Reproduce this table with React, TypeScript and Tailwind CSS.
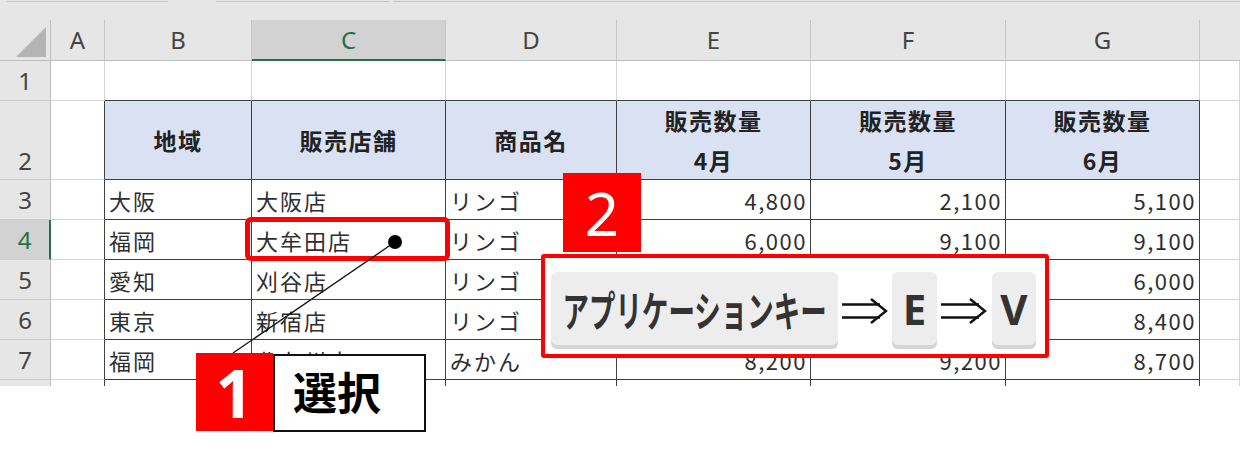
import React from "react";

const CJK = "font-['Noto_Sans_CJK_JP',sans-serif]";
const LAT = "font-['Noto_Sans',sans-serif]";

const COLS = ["A", "B", "C", "D", "E", "F", "G"];

// E5, F5, E6, F6 sit under the key-sequence callout
const DATA = [
  { n: 3, b: "大阪", c: "大阪店", d: "リンゴ", e: "4,800", f: "2,100", g: "5,100" },
  { n: 4, b: "福岡", c: "大牟田店", d: "リンゴ", e: "6,000", f: "9,100", g: "9,100" },
  { n: 5, b: "愛知", c: "刈谷店", d: "リンゴ", e: "", f: "", g: "6,000" },
  { n: 6, b: "東京", c: "新宿店", d: "リンゴ", e: "", f: "", g: "8,400" },
  { n: 7, b: "福岡", c: "北九州店", d: "みかん", e: "8,200", f: "9,200", g: "8,700" },
];

function RowHead({ label, selected, bottom }: { label: string; selected?: boolean; bottom?: boolean }) {
  return (
    <div
      className={
        "flex justify-center border-b border-b-[#d0d0d0] text-[24px] leading-none " +
        LAT +
        (bottom ? " items-end pb-[6px]" : " items-center") +
        (selected
          ? " bg-[#d2d2d2] border-r-2 border-r-[#217346] text-[#217346]"
          : " bg-[#e6e6e6] border-r border-r-[#bdbdbd] text-[#444]")
      }
    >
      {label}
    </div>
  );
}

function Arrow() {
  return (
    <svg width="46" height="26" viewBox="0 0 46 26" className="shrink-0">
      <path d="M0 6.5H38M0 19.5H38" stroke="#111" strokeWidth="2.4" fill="none" />
      <path d="M29 1L44 13L29 25" stroke="#111" strokeWidth="2.4" fill="none" strokeLinejoin="miter" />
    </svg>
  );
}

function Key({ children, className }: { children: React.ReactNode; className?: string }) {
  return (
    <div
      className={
        "h-[77px] rounded-[6px] bg-[#ededed] shadow-[inset_0_-4px_0_#d5d5d5] flex items-center justify-center overflow-visible " +
        (className ?? "")
      }
    >
      {children}
    </div>
  );
}

export default function App() {
  const light = "border-[#d4d4d4]";
  return (
    <div className="relative w-[1240px] h-[467px] overflow-hidden bg-white text-[#2e2e2e]">
      {/* strip above the sheet */}
      <div className="h-[20px] bg-[#e6e6e6] flex items-start">
        <div className="ml-[7px] w-[161px] h-[2px] border-b border-[#c4c4c4]" />
        <div className="ml-[48px] w-[173px] h-[2px] border-b border-[#c4c4c4]" />
        <div className="ml-[4px] flex-1 h-[2px] border-b border-[#c4c4c4]" />
      </div>

      <div className="grid grid-cols-[51px_54px_147px_194px_171px_194px_195px_194px_1fr] grid-rows-[41px_40px_79px_40px_40px_40px_40px_40px_6px]">
        {/* column letters */}
        <div className="bg-[#e6e6e6] border-r border-b border-[#bdbdbd]">
          <svg width="50" height="40" viewBox="0 0 50 40">
            <polygon points="16,37 46,7 46,37" fill="#b4b4b4" />
          </svg>
        </div>
        {COLS.map((c) => (
          <div
            key={c}
            className={
              "flex items-center justify-center border-r border-r-[#c8c8c8] text-[24px] leading-none " +
              LAT +
              (c === "C"
                ? " bg-[#d2d2d2] border-b-2 border-b-[#217346] text-[#1f6f52]"
                : " bg-[#e6e6e6] border-b border-b-[#bdbdbd] text-[#444]")
            }
          >
            {c}
          </div>
        ))}
        <div className="bg-[#e6e6e6] border-b border-[#bdbdbd]" />

        {/* row 1 */}
        <RowHead label="1" />
        <div className={"border-r border-b " + light} />
        {["B", "C", "D", "E", "F", "G"].map((c) => (
          <div key={c} className="border-r border-r-[#d4d4d4] border-b border-b-[#404040]" />
        ))}
        <div className={"border-r border-b " + light} />

        {/* row 2 header */}
        <RowHead label="2" bottom />
        <div className="border-r border-r-[#404040] border-b border-b-[#d4d4d4]" />
        {[["地域"], ["販売店舗"], ["商品名"], ["販売数量", "4月"], ["販売数量", "5月"], ["販売数量", "6月"]].map(
          (lines, i) => (
            <div
              key={i}
              className={
                "flex flex-col items-center justify-center bg-[#d9e1f2] border-r border-b border-[#404040] font-bold text-[23px] tracking-[1.5px] leading-[40px] text-[#222] " +
                CJK
              }
            >
              {lines.map((l) => (
                <span key={l}>{l}</span>
              ))}
            </div>
          )
        )}
        <div className={"border-r border-b " + light} />

        {/* data rows */}
        {DATA.map((r) => (
          <React.Fragment key={r.n}>
            <RowHead label={String(r.n)} selected={r.n === 4} />
            <div className="border-r border-r-[#404040] border-b border-b-[#d4d4d4]" />
            {[r.b, r.c, r.d].map((t, i) => (
              <div
                key={i}
                className={
                  "flex items-center pl-[4px] border-r border-b border-[#404040] text-[22px] tracking-[2px] leading-none whitespace-nowrap " +
                  CJK
                }
              >
                {t}
              </div>
            ))}
            {[r.e, r.f, r.g].map((t, i) => (
              <div
                key={i}
                className={
                  "flex items-center justify-end pr-[3px] border-r border-b border-[#404040] text-[22px] tracking-[1.5px] leading-none " +
                  CJK
                }
              >
                {t}
              </div>
            ))}
            <div className={"border-r border-b " + light} />
          </React.Fragment>
        ))}

        {/* partial row 8 */}
        <div className="bg-[#e6e6e6] border-r border-[#bdbdbd]" />
        <div className="border-r border-[#404040]" />
        {["B", "C", "D", "E", "F", "G"].map((c) => (
          <div key={c} className="border-r border-[#404040]" />
        ))}
        <div className={"border-r " + light} />
      </div>

      {/* annotation: selected cell */}
      <div className="absolute left-[245px] top-[217px] w-[205px] h-[44px] rounded-[6px] border-[5px] border-[#ff0000]" />

      <svg className="absolute left-0 top-0 pointer-events-none" width="1240" height="467">
        <line x1="395" y1="242" x2="233" y2="353" stroke="#111" strokeWidth="1.3" />
        <circle cx="395" cy="242" r="7" fill="#000" />
      </svg>

      {/* callout 1 */}
      <div className="absolute left-[196px] top-[353px] flex">
        <div
          className={
            "w-[77px] h-[78px] bg-[#ff0000] flex items-center justify-center text-white font-bold text-[66px] leading-none " +
            LAT
          }
        >
          1
        </div>
        <div
          className={
            "mt-[1px] w-[153px] h-[78px] bg-white border-2 border-[#111] flex items-center pl-[18px] pb-[4px] font-bold text-[44px] leading-none text-black " +
            CJK
          }
        >
          選択
        </div>
      </div>

      {/* callout 2 */}
      <div
        className={
          "absolute left-[563px] top-[173px] w-[78px] h-[79px] bg-[#ff0000] flex items-center justify-center text-white text-[60px] leading-none " +
          LAT
        }
      >
        2
      </div>

      {/* key sequence */}
      <div className="absolute left-[541px] top-[254px] w-[508px] h-[104px] bg-white border-4 border-[#ff0000] rounded-[3px] flex items-start gap-[4px] pt-[14px] pl-[6px]">
        <Key className="w-[287px]">
          <span
            className={
              "shrink-0 whitespace-nowrap font-bold text-[42px] leading-none text-[#333] scale-x-[0.63] pb-[4px] " + CJK
            }
          >
            アプリケーションキー
          </span>
        </Key>
        <div className="h-[77px] flex items-center">
          <Arrow />
        </div>
        <Key className="w-[45px]">
          <span className={"font-bold text-[42px] leading-none text-[#333] pb-[4px] " + LAT}>E</span>
        </Key>
        <div className="h-[77px] flex items-center">
          <Arrow />
        </div>
        <Key className="w-[44px] ml-[1px]">
          <span className={"font-bold text-[42px] leading-none text-[#333] pb-[4px] " + LAT}>V</span>
        </Key>
      </div>
    </div>
  );
}
